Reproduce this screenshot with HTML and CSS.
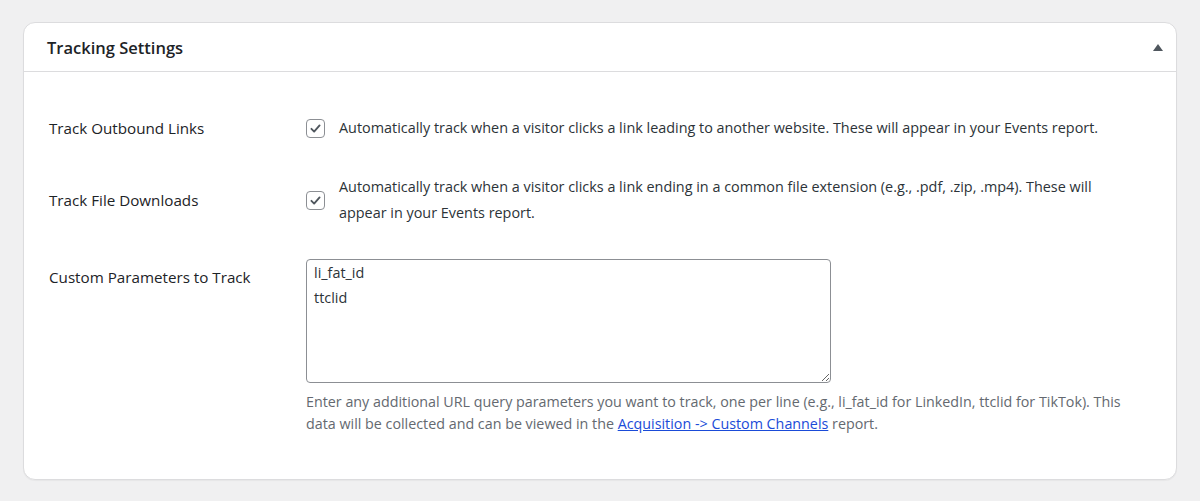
FILE: index.html
```html
<!DOCTYPE html>
<html>
<head>
<meta charset="utf-8">
<link rel="stylesheet" href="styles.css">
</head>
<body>
<div class="page">
  <section class="card">
    <header class="card-head">
      <h2 class="card-title">Tracking Settings</h2>
      <span class="toggle"></span>
    </header>
    <div class="card-body">
      <div class="row row-1">
        <div class="label">Track Outbound Links</div>
        <div class="field check-field">
          <span class="checkbox"><svg viewBox="0 0 20 20" width="20" height="20"><path d="M5.2 10.4 L8.4 13.6 L14.8 6.4" fill="none" stroke="#50575e" stroke-width="2.2" stroke-linecap="round" stroke-linejoin="round"/></svg></span>
          <p class="check-text">Automatically track when a visitor clicks a link leading to another website. These will appear in your Events report.</p>
        </div>
      </div>
      <div class="row row-2">
        <div class="label">Track File Downloads</div>
        <div class="field check-field">
          <span class="checkbox"><svg viewBox="0 0 20 20" width="20" height="20"><path d="M5.2 10.4 L8.4 13.6 L14.8 6.4" fill="none" stroke="#50575e" stroke-width="2.2" stroke-linecap="round" stroke-linejoin="round"/></svg></span>
          <p class="check-text">Automatically track when a visitor clicks a link ending in a common file extension (e.g., .pdf, .zip, .mp4). These will appear in your Events report.</p>
        </div>
      </div>
      <div class="row row-3">
        <div class="label label-3">Custom Parameters to Track</div>
        <div class="field">
          <textarea class="params" spellcheck="false">li_fat_id
ttclid</textarea>
          <p class="help">Enter any additional URL query parameters you want to track, one per line (e.g., li_fat_id for LinkedIn, ttclid for TikTok). This data will be collected and can be viewed in the <a href="#">Acquisition -&gt; Custom Channels</a> report.</p>
        </div>
      </div>
    </div>
  </section>
</div>
</body>
</html>
```

FILE: styles.css
```css
* { box-sizing: border-box; }
html, body {
  margin: 0;
  padding: 0;
  background: #f0f0f1;
}
body {
  font-family: "Open Sans", "Noto Sans", sans-serif;
  font-size: 14.4px;
  color: #1d2327;
}
.page {
  padding: 22px 23px 22px 23px;
}
.card {
  background: #fff;
  border: 1px solid #dcdcde;
  border-radius: 12px;
  box-shadow: 0 1px 1px rgba(0,0,0,0.04);
  height: 458px;
}
.card-head {
  display: flex;
  align-items: center;
  justify-content: space-between;
  height: 49px;
  padding: 0 13px 0 23px;
  border-bottom: 1px solid #dcdcde;
}
.card-title {
  margin: 0;
  font-size: 16.5px;
  font-weight: 600;
  color: #1d2327;
}
.toggle {
  width: 0;
  height: 0;
  border-left: 5px solid transparent;
  border-right: 5px solid transparent;
  border-bottom: 7px solid #50575e;
}
.card-body {
  padding: 43px 25px 0 25px;
}
.row {
  display: grid;
  grid-template-columns: 257px 1fr;
  align-items: center;
}
.row-2 { margin-top: 33px; }
.row-3 { margin-top: 33px; align-items: start; }
.label {
  font-size: 15.2px;
  line-height: 20px;
  color: #1d2327;
}
.label-3 { padding-top: 8px; }
.check-field {
  display: flex;
  align-items: center;
  gap: 14px;
}
.checkbox {
  flex: none;
  width: 19px;
  height: 19px;
  border: 1px solid #8c8f94;
  border-radius: 4px;
  display: flex;
  align-items: center;
  justify-content: center;
}
.checkbox svg { width: 17px; height: 17px; }
.check-text {
  margin: 0;
  line-height: 26px;
  color: #2c3338;
  max-width: 780px;
}
.params {
  display: block;
  width: 525px;
  height: 124px;
  margin: 0;
  padding: 0 7px;
  border: 1px solid #8c8f94;
  border-radius: 4px;
  font-family: inherit;
  font-size: 14.4px;
  line-height: 25px;
  color: #2c3338;
  resize: both;
  outline: none;
}
.help {
  margin: 8px 0 0 0;
  max-width: 830px;
  font-size: 14.3px;
  line-height: 22px;
  color: #646970;
}
.help a {
  color: #1a4bd8;
  text-decoration: underline;
}
```
